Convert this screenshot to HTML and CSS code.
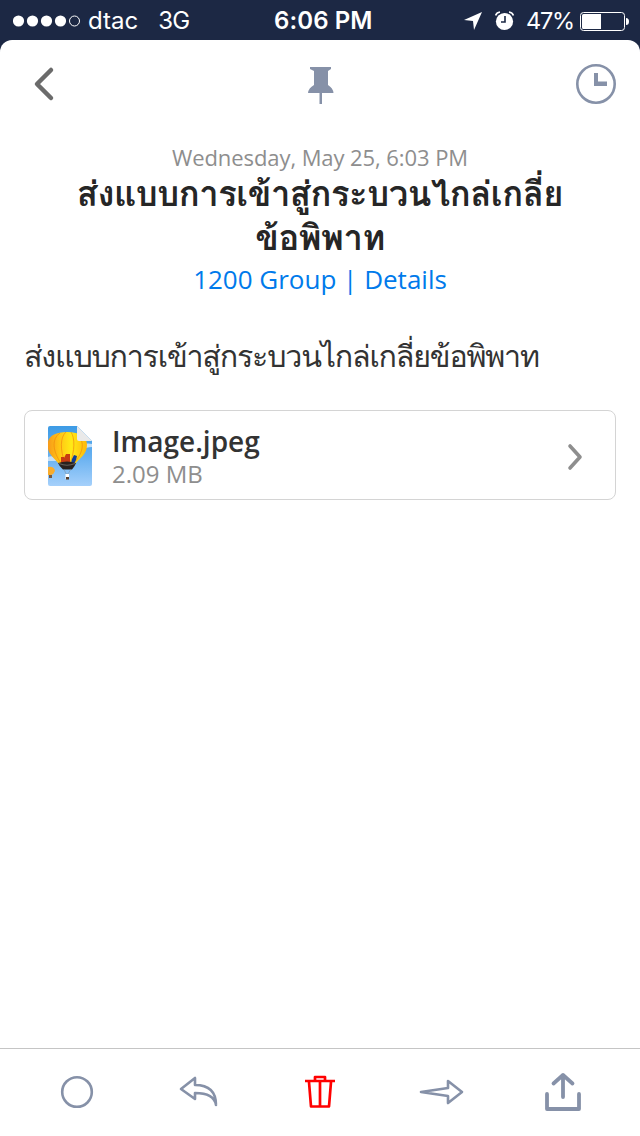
FILE: index.html
```html
<!DOCTYPE html>
<html lang="th">
<head>
<meta charset="utf-8">
<title>Message</title>
<link rel="stylesheet" href="styles.css">
</head>
<body>
<div class="screen">
  <header class="status">
    <div class="carrier">
      <svg class="signal" width="68" height="12" viewBox="0 0 68 12"><g fill="#fff"><circle cx="5.5" cy="6" r="5.6"/><circle cx="19.5" cy="6" r="5.6"/><circle cx="33.5" cy="6" r="5.6"/><circle cx="47.5" cy="6" r="5.6"/></g><circle cx="61.5" cy="6" r="5" fill="none" stroke="#fff"/></svg>
      <span class="operator">dtac</span><span class="network">3G</span>
    </div>
    <div class="clock">6:06 PM</div>
    <div class="indicators">
      <svg class="location" width="18" height="18" viewBox="0 0 18 18"><path d="M18 0 10 18 9 9 0 8Z" fill="#fff"/></svg>
      <svg class="alarm" width="20" height="20" viewBox="0 0 20 20"><circle cx="9.5" cy="10.5" r="8.6" fill="#fff"/><path d="M.6 4.5Q1.5 1.4 5 1M18.400 4.500Q17.500 1.400 14 1" fill="none" stroke="#fff" stroke-width="1.600"/><path d="M10 5v6H6" fill="none" stroke="#1c2844" stroke-width="1.600"/></svg>
      <span class="percent">47%</span>
      <svg class="battery" width="49" height="19" viewBox="0 0 49 19"><rect x=".5" y=".5" width="44" height="18" rx="3" fill="none" stroke="#fff"/><path d="M3.500 2H21v15H3.500Q2 17 2 15.500v-12Q2 2 3.500 2M46 6q3 0 3 3.500T46 13Z" fill="#fff"/></svg>
    </div>
  </header>
  <main class="sheet">
    <nav class="toolbar">
      <svg class="back" width="22" height="36" viewBox="0 0 22 36"><path d="M18 4 4 18 18 32" fill="none" stroke="#6b6b6b" stroke-width="4.500" stroke-linecap="round" stroke-linejoin="round"/></svg>
      <svg class="pin" width="26" height="38" viewBox="0 0 26 38"><path d="M2 0H23V2L20 4V18Q25 21 25.500 26H14V37H11.500V26H0Q.5 21 6 18V4L2 2Z" fill="#8691a8"/></svg>
      <svg class="history" width="40" height="40" viewBox="0 0 40 40"><circle cx="20" cy="20" r="18.700" fill="none" stroke="#8691a8" stroke-width="2.600"/><path d="M18 9h4v8.500h9v4.500H18Z" fill="#8691a8"/></svg>
    </nav>
    <section class="heading">
      <p class="date"><span>Wednesday, May 25, 6:03 PM</span></p>
      <h1 class="subject"><span>ส่งแบบการเข้าสู่กระบวนไกล่เกลี่ย</span><br><span>ข้อพิพาท</span></h1>
      <p class="group"><span>1200 Group | Details</span></p>
    </section>
    <p class="message"><span>ส่งแบบการเข้าสู่กระบวนไกล่เกลี่ยข้อพิพาท</span></p>
    <article class="attachment">
      <svg class="thumb" width="44" height="60" viewBox="0 0 44 60">
        <defs>
          <linearGradient id="sky" x2="0" y2="1"><stop stop-color="#3d9be5"/><stop offset=".5" stop-color="#66b0f0"/><stop offset="1" stop-color="#a5d0fb"/></linearGradient>
          <linearGradient id="balloon"><stop stop-color="#f7981a"/><stop offset=".3" stop-color="#ffc514"/><stop offset=".6" stop-color="#ffea16"/><stop offset="1" stop-color="#ffb80c"/></linearGradient>
          <clipPath id="page"><path d="M2 0H29L44 15V58Q44 60 42 60H2Q0 60 0 58V2Q0 0 2 0Z"/></clipPath>
        </defs>
        <g clip-path="url(#page)">
          <path d="M0 0H44V60H0Z" fill="url(#sky)"/>
          <path d="M0 31Q5 29 9 33L8 35H0ZM30 23Q35 16 44 18V21Q38 21 35 24Z" fill="#c5e0f7"/>
          <path d="M11 38C5 31-.5 27-.5 19C-.5 11 6 6 19 6S39 11 39 19C39 28 32 32 27 38Z" fill="url(#balloon)"/>
          <path d="M13 37C5 26 3 13 12 7M17 37C12 24 12 11 18 6M22 37C27 25 27 12 23 6M26 37C37 25 36 14 29 8" fill="none" stroke="#f08a10" stroke-width=".7"/>
          <path d="M13 37V31h3v1l2-4h4v9Z" fill="#c83c12"/>
          <path d="M23 37l1-4 2-4 3 1-1 4-2 4Z" fill="#103c96"/>
          <path d="M10 37Q19 34 28 37Q27 40 24 43.500H15Q11 40 10 37Z" fill="#28211f"/><path d="M11 37.500Q19 41 27 37.500" fill="none" stroke="#66605b" stroke-width="1.200"/>
          <path d="M16 43l2 5h2l3-5" fill="none" stroke="#798996" stroke-width=".5"/>
          <path d="M17.500 48h3.500v5h-3.500Z" fill="#fff"/><path d="M18 51h3v2.500h-3Z" fill="#57402d"/>
          <path d="M0 41Q6 40 7 45Q6 48 3 49H0Z" fill="#f9ac2b"/><path d="M1 49h3v3H1Z" fill="#77593e"/>
        </g>
        <path d="M29 0 44 15H31Q29 15 29 13Z" fill="#e9e9e9"/>
      </svg>
      <div class="file"><p class="name"><span>Image.jpeg</span></p><p class="size"><span>2.09 MB</span></p></div>
      <svg class="chevron" width="18" height="30" viewBox="0 0 18 30"><path d="M4 4 14 15 4 26" fill="none" stroke="#8e8e8e" stroke-width="3.600" stroke-linecap="round" stroke-linejoin="round"/></svg>
    </article>
  </main>
  <footer class="actions">
    <svg class="unread" width="34" height="34" viewBox="0 0 34 34"><circle cx="17" cy="17" r="14.800" fill="none" stroke="#8691a8" stroke-width="2.600"/></svg>
    <svg class="reply" width="40" height="32" viewBox="0 0 40 32"><path d="M2 13 16 2V9Q37 9 37 29Q35 17 16 17V23Z" fill="none" stroke="#8691a8" stroke-width="2.600" stroke-linejoin="round"/></svg>
    <svg class="trash" width="30" height="34" viewBox="0 0 30 34"><path d="M0 6H30M10 6V2H20V6M4 7 6 31.500H24L26 7M15 7V31" fill="none" stroke="#f00" stroke-width="2.700" stroke-linejoin="round"/></svg>
    <svg class="forward" width="46" height="28" viewBox="0 0 46 28"><path d="M2 14 29 10V3L43 14 29 25V18Z" fill="none" stroke="#8691a8" stroke-width="2.600" stroke-linejoin="round"/></svg>
    <svg class="share" width="38" height="40" viewBox="0 0 38 40"><path d="M19 25V3M9.500 11.500 19 3 28.500 11.500M3 22V37H35V22" fill="none" stroke="#8691a8" stroke-width="3.800" stroke-linecap="round" stroke-linejoin="round"/></svg>
  </footer>
</div>
</body>
</html>
```
FILE: styles.css
```css
* { box-sizing: border-box; }
body, p, h1 { margin: 0; }
body { font-family: "Open Sans", Loma, Garuda, Waree, Umpush, "Noto Serif Thai", sans-serif; background: #1c2844; }
svg { display: block; flex-shrink: 0; }
span { display: inline-block; white-space: nowrap; vertical-align: top; }
.screen { width: 640px; height: 1136px; display: flex; flex-direction: column; background: #1c2844; overflow: hidden; }
.status { height: 40px; padding: 1px 11px 0 13px; display: grid; grid-template-columns: 264px 1fr 210px; align-items: center; color: #fff; font: 24px/40px Inter, sans-serif; }
.carrier, .indicators { display: flex; align-items: center; }
.operator { margin-left: 7px; }
.network { margin-left: 20px; letter-spacing: -.8px; }
.clock { font-weight: 600; white-space: nowrap; margin-left: -3px; letter-spacing: .1px; }
.indicators { justify-content: flex-end; }
.location { margin-bottom: 0; }
.alarm { margin: 0 0 1px 13px; }
.percent { margin: 0 6px 0 11px; font-size: 23.5px; letter-spacing: -1.2px; }
.sheet { flex: 1; background: #fff; border-radius: 12px 12px 0 0; padding: 0 24px; }
.toolbar { height: 104px; padding: 24px 0 0 9px; display: flex; justify-content: space-between; align-items: flex-start; }
.back { margin-top: 2px; }
.pin { margin: 3px 0 0 11px; }
.heading { text-align: center; }
.date { height: 27px; font-size: 22px; line-height: 27px; letter-spacing: -.08px; color: #8e8e8e; }
.subject { height: 88px; font-size: 34.6px; line-height: 44px; letter-spacing: -.45px; color: #262626; font-weight: 700; }
.group { height: 41px; font-size: 26px; line-height: 40px; color: #007aeb; }
.message { margin-top: 34px; height: 44px; font-size: 30.4px; line-height: 44px; letter-spacing: -1.2px; color: #333; }
.attachment { margin-top: 32px; height: 90px; border: 1px solid #d4d4d4; border-radius: 8px; display: flex; align-items: center; padding: 0 31px 0 23px; }
.thumb { margin-top: 2px; }
.file { margin-left: 20px; flex: 1; }
.name { font-size: 28px; line-height: 36px; font-weight: 600; color: #333; }
.size { font-size: 24px; line-height: 30px; margin-bottom: -2px; color: #8e8e8e; }
.chevron { margin-top: 4px; }
.actions { height: 88px; background: #fff; border-top: 1px solid #c5c5c5; padding: 0 58px 2px 60px; display: flex; align-items: center; }
.reply { margin: 1px 0 0 85px; }
.trash { margin-left: 86px; }
.forward { margin: 1px 0 0 84px; }
.share { margin-left: 79px; }
```
